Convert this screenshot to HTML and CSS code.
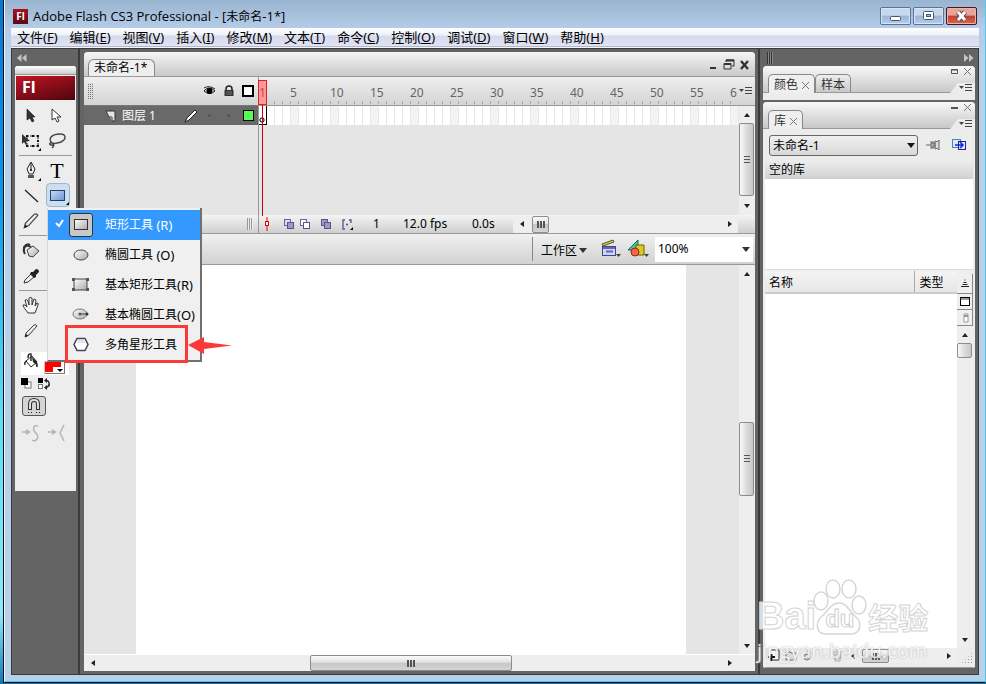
FILE: index.html
```html
<!DOCTYPE html>
<html lang="zh-CN">
<head>
<meta charset="utf-8">
<title>Adobe Flash CS3 Professional - [未命名-1*]</title>
<link rel="stylesheet" href="styles.css">
</head>
<body>
<svg class="defs" aria-hidden="true">
  <defs>
    <linearGradient id="metal" x1="0" y1="0" x2="1" y2="1"><stop offset="0" stop-color="#fff"/><stop offset="1" stop-color="#a8a8a8"/></linearGradient>
    <linearGradient id="bluefill" x1="0" y1="0" x2="1" y2="1"><stop offset="0" stop-color="#c9dcfa"/><stop offset="1" stop-color="#6f93d6"/></linearGradient>
    <symbol id="menu-lines" viewBox="0 0 14 10"><path d="M0 3h5L2.500 6z" fill="#444"/><path d="M6 1.500h7M6 4.500h7M6 7.500h7" stroke="#444"/></symbol>
    <symbol id="pencil" viewBox="0 0 16 16"><path d="M2 14l1-4 8-8q2-1 3 1l-8 9z" fill="#ddd" stroke="#444"/><path d="M2 14l1-3 2 2z" fill="#111"/><path d="M5 10l7-7" stroke="#fff"/></symbol>
  </defs>
</svg>
<div class="window">
  <header class="titlebar">
    <span class="app-icon">Fl</span>
    <h1>Adobe Flash CS3 Professional - [<span>未命名</span>-1*]</h1>
    <div class="window-buttons">
      <button aria-label="最小化"><svg width="29" height="16"><rect x="9.500" y="8.500" width="10" height="4" rx="1" fill="#fff" stroke="#46566f"/></svg></button>
      <button aria-label="还原"><svg width="29" height="16"><rect x="9.500" y="3.500" width="10" height="8" rx="1" fill="#fff" stroke="#46566f"/><rect x="12.500" y="6.500" width="4" height="2" fill="#9cc0e6" stroke="#46566f"/></svg></button>
      <button class="close" aria-label="关闭"><svg width="29" height="16"><path d="M11 4l7 8M18 4l-7 8" stroke="#5a4a58" stroke-width="5"/><path d="M11 4l7 8M18 4l-7 8" stroke="#fff" stroke-width="3"/></svg></button>
    </div>
  </header>
  <nav class="menubar">
    <button>文件(<u>F</u>)</button><button>编辑(<u>E</u>)</button><button>视图(<u>V</u>)</button><button>插入(<u>I</u>)</button><button>修改(<u>M</u>)</button><button>文本(<u>T</u>)</button><button>命令(<u>C</u>)</button><button>控制(<u>O</u>)</button><button>调试(<u>D</u>)</button><button>窗口(<u>W</u>)</button><button>帮助(<u>H</u>)</button>
  </nav>
  <div class="main">
    <aside class="tools-column">
      <button class="collapse" aria-label="折叠"><svg width="10" height="8"><path d="M4.500 0v8L0 4zM9.500 0v8L5 4z" fill="#c4c4c4"/></svg></button>
      <div class="tools">
        <div class="tools-grip"></div>
        <div class="fl-logo">Fl</div>
        <div class="tool-grid">
          <button aria-label="选择工具"><svg width="20" height="20"><path d="M6 3v11l3-2 2 4 2-1-2-4h3z" fill="#333" stroke="#111" stroke-width=".6"/></svg></button>
          <button aria-label="部分选取工具"><svg width="20" height="20"><path d="M5 3v11l3-2 2 4 2-1-2-4h4z" fill="#fff" stroke="#333"/></svg></button>
          <button aria-label="任意变形工具"><svg width="20" height="20"><rect x="6" y="5" width="11" height="10" fill="none" stroke="#222" stroke-dasharray="2 1"/><path d="M1 3v10l2-2 2 3 1-1-1-3h4z" fill="#333"/><path d="M5 4h2v2H5zM11 4h2v2h-2zM16 4h2v2h-2zM16 9h2v2h-2zM5 14h2v2H5zM11 14h2v2h-2zM16 14h2v2h-2z" fill="#111"/><path d="M20 17v3h-3z"/></svg></button>
          <button aria-label="套索工具"><svg width="20" height="20"><path d="M5 12C0 7 6 3 13 3c6 0 7 5 1 8-3 1-6 2-9 1zm0 0c-3-1-3 2 0 2s2-2 0-2c3 1 2 3 0 5" fill="none" stroke="#444" stroke-width="1.400"/></svg></button>
        </div>
        <hr>
        <div class="tool-grid">
          <button aria-label="钢笔工具"><svg width="20" height="20"><path d="M10 1l4 7-2 5H8L6 8z" fill="#eee" stroke="#222"/><path d="M10 2v7" stroke="#222"/><circle cx="10" cy="9" r="1"/><path d="M7 14h6v3H7z" fill="#555"/><path d="M20 17v3h-3z"/></svg></button>
          <button aria-label="文本工具"><span class="text-tool">T</span></button>
          <button aria-label="线条工具"><svg width="20" height="20"><path d="M4 4l13 12" stroke="#222" stroke-width="1.300"/></svg></button>
          <div class="tool-slot">
            <button class="active" aria-label="矩形工具"><svg width="22" height="20"><rect x="3.500" y="5.500" width="14" height="10" fill="url(#bluefill)" stroke="#24406f"/><path d="M22 17v3h-3z"/></svg></button>
            <div class="tool-menu" role="menu">
              <button class="selected" role="menuitem"><svg class="check" width="9" height="9"><path d="M1 4l3 3 4-6" fill="none" stroke="#fff" stroke-width="2"/></svg><span class="menu-icon"><svg width="22" height="22"><rect x="4.500" y="5.500" width="13" height="10" fill="url(#metal)" stroke="#333"/></svg></span>矩形工具<span class="key">&nbsp;(R)</span></button>
              <button role="menuitem"><span class="menu-icon"><svg width="22" height="22"><ellipse cx="11" cy="11" rx="7" ry="5" fill="url(#metal)" stroke="#444"/></svg></span>椭圆工具<span class="key">&nbsp;(O)</span></button>
              <button role="menuitem"><span class="menu-icon"><svg width="22" height="22"><rect x="4" y="5" width="13" height="11" fill="url(#metal)" stroke="#444"/><path d="M2 4h3v3H2zM16 4h3v3h-3zM2 14h3v3H2zM16 14h3v3h-3z" fill="#555"/></svg></span>基本矩形工具<span class="key">(R)</span></button>
              <button role="menuitem"><span class="menu-icon"><svg width="22" height="22"><ellipse cx="10" cy="10" rx="7" ry="5" fill="url(#metal)" stroke="#777"/><path d="M10 10h7" stroke="#444"/><circle cx="10" cy="10" r="1.500" fill="#555"/><circle cx="17" cy="10" r="1.500" fill="#333"/></svg></span>基本椭圆工具<span class="key">(O)</span></button>
              <button role="menuitem"><span class="menu-icon"><svg width="22" height="22"><path d="M7 4.500h8l3 6-3 6H7l-3-6z" fill="#fff" stroke="#445" stroke-width="1.500"/><path d="M8 6h6l1 3H7z" fill="#dce5ea"/></svg></span>多角星形工具</button>
              <div class="highlight"></div>
              <svg class="arrow" width="44" height="17"><path d="M0 8L16 0v5l28 3.500L16 12v5z" fill="#f93a37"/></svg>
            </div>
          </div>
          <button aria-label="铅笔工具"><svg width="18" height="18"><use href="#pencil"/></svg></button>
        </div>
        <hr>
        <div class="tool-grid single">
          <button aria-label="颜料桶工具"><svg width="20" height="20"><path d="M4 13c-3-5 0-9 4-8l3 2M3 11V6q3-4 6-2" fill="none" stroke="#333" stroke-width="2"/><path d="M6 9l6-4 6 5-6 6-4-1z" fill="url(#metal)" stroke="#444"/></svg></button>
          <button aria-label="滴管工具"><svg width="20" height="20"><path d="M3 17l1-3 6-6 3 3-6 5z" fill="#eee" stroke="#333"/><path d="M10 6l2 0 3-3q3 0 3 3l-3 3v2l-2 1-4-4z" fill="#222"/></svg></button>
        </div>
        <hr>
        <div class="tool-grid single">
          <button aria-label="手形工具"><svg width="20" height="20"><path d="M7 17C5 14 2 11 2 9q2-1 4 2L4 4q2-1 3 1l1 4V2q2-1 3 0v7l2-6q2 0 2 2l-1 5 2-3q2 0 1 2l-3 8z" fill="#f6f6f6" stroke="#333"/></svg></button>
          <button aria-label="笔触颜色"><svg width="16" height="16"><use href="#pencil"/></svg></button>
        </div>
        <div class="fill-row"><svg width="20" height="20"><path d="M5 9l6-5 5 6-6 5z" fill="#fff" stroke="#222"/><path d="M10 9V2q-3-1-3 4M5 9q-2 2-1 4M15 9l1 6" fill="none" stroke="#222" stroke-width="1.400"/><path d="M11 5l5 5 1 4-5-4z" fill="#222"/></svg><button class="swatch" aria-label="填充颜色"><svg width="20" height="12"><path d="M0 0h16v5H8v5H0z" fill="red"/><path d="M12 7h6l-3 3z"/></svg></button></div>
        <div class="small-row"><svg width="12" height="12"><rect x="4" y="4" width="6" height="6" fill="#fff" stroke="#777"/><path d="M0 0h7v7H0z"/></svg><svg width="14" height="12"><path d="M0 0h5v5H0z"/><rect x=".5" y="6.500" width="4" height="4" fill="#fff" stroke="#777"/><path d="M8 2.500q4 0 3 6M8 9.500q2 0 3-3" fill="none" stroke="#222" stroke-width="1.400"/><path d="M6 2.500l3-2.500v5zM6 9.500L9 7v5z" fill="#222"/></svg></div>
        <button class="magnet" aria-label="贴紧至对象"><svg width="18" height="18"><path d="M5 13V7q0-4 4-4t4 4v6" fill="none" stroke="#333" stroke-width="4"/><path d="M5 12V7q0-4 4-4t4 4v5" fill="none" stroke="#ddd" stroke-width="2"/><path d="M3 15.500h1M6 15.500h1M11 15.500h1M14 15.500h1" stroke="#222"/></svg></button>
        <div class="tool-grid"><span><svg width="20" height="20"><path d="M1 8h5M17 2q-6-1-4 5c3 3 5 5 3 8q-2 3-5 1" fill="none" stroke="#b4b4b4" stroke-width="1.500"/><path d="M5 5l5 3-5 3z" fill="#b4b4b4"/></svg></span><span><svg width="20" height="20"><path d="M1 8h5M17 1l-4 8 4 8" fill="none" stroke="#b4b4b4" stroke-width="1.500"/><path d="M5 5l5 3-5 3z" fill="#b4b4b4"/></svg></span></div>
      </div>
    </aside>

    <main class="document">
      <div class="doc-tabs">
        <button class="doc-tab">未命名-1*</button>
        <div class="doc-controls"><svg width="10" height="12"><path d="M2 9h6" stroke="#333" stroke-width="2"/></svg><svg width="12" height="12"><path d="M3 3V1h8v6H9M1 4.500h7V10H1z" fill="none" stroke="#333"/><path d="M3 1.500h8M1 5h7" stroke="#333" stroke-width="2"/></svg><svg width="10" height="12"><path d="M1 2l7 8M8 2l-7 8" stroke="#333" stroke-width="2.400"/></svg></div>
      </div>
      <section class="timeline">
        <div class="layers">
          <div class="layer-head"><span class="grip"></span>
            <svg width="13" height="12"><path d="M1 6q5-6 11 0-5 5-11 0" fill="#ddd" stroke="#222"/><circle cx="6.500" cy="6" r="3"/><path d="M1 3q5-3 11 1" fill="none" stroke="#222"/></svg>
            <svg width="12" height="12"><path d="M3 6V4q0-3 3-3t3 3v2" fill="none" stroke="#222" stroke-width="1.500"/><path d="M1.500 5h9v6h-9z" fill="#333"/><path d="M3 7h6M3 9h6" stroke="#777"/></svg>
            <svg width="12" height="12"><rect x="1" y="1" width="10" height="10" fill="#fff" stroke="#000" stroke-width="2"/></svg>
          </div>
          <div class="layer-row"><svg width="11" height="12"><path d="M1 1h9v10H7V7H4z" fill="#e4e4e4" stroke="#333"/><path d="M1 2l4 5h2v4z" fill="#888"/></svg><span class="layer-name">图层 1</span><svg width="14" height="14"><path d="M1 13l2-4 8-8 2 2-8 8z" fill="#fff" stroke="#222"/></svg><i class="dot"></i><i class="dot"></i><span class="layer-color"></span></div>
          <div class="layer-foot"><span class="foot-grip"></span></div>
        </div>
        <div class="frames">
          <div class="ruler"><div class="numbers"><span>5</span><span>10</span><span>15</span><span>20</span><span>25</span><span>30</span><span>35</span><span>40</span><span>45</span><span>50</span><span>55</span><span class="last">6</span></div><svg width="14" height="10"><use href="#menu-lines"/></svg></div>
          <div class="frame-body">
            <div class="frame-area"><div class="frame-row"><span class="keyframe"></span></div></div>
            <div class="vscroll"><button class="up" aria-label="向上"></button><div class="thumb"></div><button class="down" aria-label="向下"></button></div>
          </div>
          <div class="frame-foot">
            <svg width="6" height="14"><path d="M3 0v14" stroke="#e00"/><rect x="1.500" y="4.500" width="3" height="4" fill="#fff" stroke="#e00"/></svg>
            <svg width="11" height="11"><rect x=".5" y=".5" width="6" height="6" fill="#dde" stroke="#669"/><rect x="3.500" y="3.500" width="6" height="6" fill="#99c" stroke="#558"/></svg>
            <svg width="11" height="11"><rect x=".5" y=".5" width="6" height="6" fill="#fff" stroke="#669"/><rect x="3.500" y="3.500" width="6" height="6" fill="#fff" stroke="#558"/></svg>
            <svg width="11" height="11"><rect x=".5" y=".5" width="6" height="6" fill="#99c" stroke="#558"/><rect x="3.500" y="3.500" width="6" height="6" fill="#99c" stroke="#558"/></svg>
            <svg width="11" height="11"><path d="M3 1H1v9h2M7 1h2v3M4 5.500h2" fill="none" stroke="#558" stroke-width="1.300"/><path d="M11 8v3H8z"/></svg>
            <output class="current">1</output><output class="fps">12.0 fps</output><output class="time">0.0s</output>
            <div class="hscroll"><button class="left" aria-label="向左"></button><div class="thumb"></div><button class="right" aria-label="向右"></button></div>
          </div>
          <div class="playhead">1</div>
        </div>
      </section>
      <div class="edit-bar">
        <button class="workspace">工作区<i class="caret"></i></button>
        <button aria-label="编辑场景"><svg width="20" height="20"><path d="M1 5l11-4 1 2L2 7z" fill="#d8d020" stroke="#554"/><rect x="1.500" y="7.500" width="13" height="9" fill="#ccd4ff" stroke="#448"/><path d="M2 9h12M5 12.500h7" stroke="#66a" stroke-width="2"/><path d="M15 15h5l-2.500 3z" fill="#442"/></svg></button>
        <button aria-label="编辑元件"><svg width="22" height="20"><path d="M1 11L11 1v10z" fill="#4cc49c" stroke="#166"/><path d="M9 6h8v10H9z" fill="#e0c820" stroke="#660"/><circle cx="8" cy="13" r="4" fill="#f4683c" stroke="#922"/><path d="M17 15h5l-2.500 3z" fill="#442"/></svg></button>
        <div class="zoom"><input aria-label="缩放" value="100%"><i class="caret"></i></div>
      </div>
      <div class="stage">
        <div class="pasteboard"><div class="canvas"></div></div>
        <div class="vscroll"><button class="up" aria-label="向上"></button><div class="thumb"></div><button class="down" aria-label="向下"></button></div>
      </div>
      <div class="doc-foot"><div class="hscroll"><button class="left" aria-label="向左"></button><div class="thumb"></div><button class="right" aria-label="向右"></button></div></div>
    </main>

    <aside class="panels">
      <div class="panels-head"><span class="panels-grip"></span><button aria-label="展开"><svg width="10" height="8"><path d="M0 0v8l4.500-4zM5 0v8l4.500-4z" fill="#c4c4c4"/></svg></button></div>
      <section class="panel">
        <div class="panel-tabs"><button class="tab on">颜色<svg width="7" height="7"><path d="M0 0l7 7M7 0L0 7" stroke="#777"/></svg></button><button class="tab">样本</button>
          <div class="panel-side"><svg width="20" height="8"><path d="M.5 1.500h6v4h-6z" fill="none" stroke="#555"/><path d="M0 2h7" stroke="#555"/><path d="M13 0l7 7M20 0l-7 7" stroke="#777"/></svg><span class="notch"><svg width="14" height="10"><use href="#menu-lines"/></svg></span></div></div>
      </section>
      <section class="panel library">
        <div class="panel-tabs"><button class="tab on">库<svg width="7" height="7"><path d="M0 0l7 7M7 0L0 7" stroke="#777"/></svg></button>
          <div class="panel-side"><svg width="20" height="8"><path d="M0 4h7" stroke="#555" stroke-width="2"/><path d="M13 0l7 7M20 0l-7 7" stroke="#777"/></svg><span class="notch"><svg width="14" height="10"><use href="#menu-lines"/></svg></span></div></div>
        <div class="library-pick"><select aria-label="库文档"><option>未命名-1</option></select>
          <button aria-label="固定当前库"><svg width="14" height="12"><path d="M0 6h5M5 2v8M7 2v8M5 4h4v4H5M9 2q3 2 4-1v10q-1-3-4-1z" fill="#ddd" stroke="#666"/></svg></button>
          <button class="new-panel" aria-label="新建库面板"><svg width="15" height="12"><rect x=".5" y=".5" width="8" height="8" fill="#d8ecf8" stroke="#48a"/><rect x="6.500" y="2.500" width="7" height="8" fill="#d8e8ff" stroke="#228"/><path d="M3 6h7M8 3l3 3-3 3" fill="none" stroke="#12d" stroke-width="1.500"/></svg></button></div>
        <div class="library-title">空的库</div>
        <div class="preview"></div>
        <div class="library-list">
          <table><thead><tr><th>名称</th><th class="type">类型</th></tr></thead></table>
          <div class="list-side">
            <button class="sort" aria-label="排序"><svg width="8" height="9"><path d="M3.500 1h1M2.500 3.500h3M1.500 5.500h5M0 7.500h8" stroke="#222"/></svg></button>
            <button aria-label="宽库视图"><svg width="10" height="10"><rect x=".5" y=".5" width="9" height="8" fill="#fff" stroke="#000"/><path d="M1 2h8" stroke="#999" stroke-width="2"/></svg></button>
            <button aria-label="窄库视图"><svg width="8" height="10"><path d="M3 1h4v8H3z" fill="#fff" stroke="#999"/><path d="M3 3h4" stroke="#999" stroke-width="2"/></svg></button>
            <div class="vscroll"><button class="up" aria-label="向上"></button><div class="thumb"></div><button class="down" aria-label="向下"></button></div>
          </div>
        </div>
        <div class="library-foot">
          <button aria-label="新建元件"><svg width="13" height="13"><path d="M3 1h8v10H5" fill="#fff" stroke="#222"/><path d="M0 8h7M3.500 5v7" stroke="#111" stroke-width="2"/></svg></button>
          <button aria-label="新建文件夹"><svg width="13" height="13"><path d="M1 3h4l1 1h5v7H1z" fill="#ddd" stroke="#666"/></svg></button>
          <button aria-label="属性"><svg width="11" height="13"><circle cx="5" cy="8" r="3" fill="#ccc" stroke="#777"/><path d="M3 6l4-5 1 4" fill="none" stroke="#777"/></svg></button>
          <button class="trash" aria-label="删除"><svg width="11" height="13"><path d="M1 3h9M2 5h7l-1 7H3zM4 1h3M4 6v5M7 6v5" fill="none" stroke="#aaa"/></svg></button>
          <div class="hscroll"><button class="left" aria-label="向左"></button><div class="thumb"></div><button class="right" aria-label="向右"></button></div>
          <span class="resize"></span>
        </div>
      </section>
    </aside>
  </div>
</div>
<div class="watermark">
  <div class="mark-name"><span class="bai">Bai</span><span class="paw"><svg width="54" height="56" viewBox="0 0 54 56"><g fill="#fff" fill-opacity=".85" stroke="#d6d6d6" stroke-width="1.500"><ellipse cx="8" cy="22" rx="7" ry="9"/><ellipse cx="20" cy="10" rx="7" ry="9"/><ellipse cx="36" cy="10" rx="7" ry="9"/><ellipse cx="46" cy="26" rx="7" ry="9"/><path d="M26 24c8 0 10 8 17 14 6 5 5 17-5 17H13C2 55 3 43 8 38c8-6 9-14 18-14z"/></g></svg><b>du</b></span><span class="jy">经验</span></div>
  <div class="mark-url">jingyan.baidu.com</div>
</div>
</body>
</html>
```
FILE: styles.css
```css
* { box-sizing: border-box; }
body {
  margin: 0;
  min-height: 100vh;
  display: flex;
  position: relative;
  padding: 0 0 1px 3px;
  background: linear-gradient(#0876d4, #0a9ae8 30%, #5cdcf8 60%, #8ce8f8 90%, #1277b8);
  font: 12px/16px "Noto Sans", "Noto Sans CJK SC", sans-serif;
  color: #000;
  overflow: hidden;
}
button { font: inherit; color: inherit; border: 0; padding: 0; margin: 0; background: none; display: block; white-space: nowrap; }
svg { display: block; flex: none; }
.defs { position: absolute; width: 0; height: 0; }
.window {
  flex: 1;
  min-width: 0;
  display: flex;
  flex-direction: column;
  border-left: 1px solid #111;
  border-bottom: 1px solid #111;
  border-right: 1px solid #4cc8f0;
  box-shadow: inset 1px 0 #eef5fc, inset 0 -1px #4cc8e8;
  background: linear-gradient(#99b4d0, #b4cce7 28px, #b9d0eb 60px);
  padding: 0 6px 7px 7px;
}

/* title bar and menu */
.titlebar { height: 28px; display: flex; align-items: center; padding: 4px 2px 0 2px; }
.app-icon { width: 15px; height: 15px; background: linear-gradient(#a31420, #5c0810); color: #fff; font: bold 10px/15px "Open Sans", sans-serif; text-align: center; }
.titlebar h1 { margin: 0 0 0 5px; font: 400 13px/18px "Open Sans", "Noto Sans CJK SC", sans-serif; flex: 1; }
.titlebar h1 span { font-size: 12px; }
.window-buttons { display: flex; gap: 2px; }
.window-buttons button { width: 31px; height: 18px; border: 1px solid #5d7390; border-radius: 2px; background: linear-gradient(#c6d8ec 45%, #9ab5d3 50%, #b4cfec); box-shadow: inset 0 0 0 1px #d7e5f4; }
.window-buttons .close { border-color: #4a1522; background: linear-gradient(#e5a59b 45%, #c04030 50%, #d46a50); box-shadow: inset 0 0 0 1px #eeb2a6; }
.menubar { height: 20px; display: flex; gap: 12px; padding: 0 6px 1px; background: linear-gradient(#fff, #eef1f8 7px, #d6daed 8px, #dfe3f4 18px, #b4b8cc 18px, #b4b8cc 19px, #f5f5f8 19px); font-size: 13px; line-height: 19px; }

.main { flex: 1; display: flex; min-height: 0; background: #646464; border: 1px solid #3a3a3a; }

/* tools */
.tools-column { flex: 0 0 68px; border-right: 2px solid #3a3a3a; padding: 0 2px 0 3px; }
.collapse { height: 17px; padding: 4px 2px; }
.tools { background: #ededed; height: 425px; border-radius: 3px 3px 0 0; }
.tools-grip { height: 9px; background: linear-gradient(#fff, #ccc); border-bottom: 1px solid #999; border-radius: 3px 3px 0 0; }
.fl-logo { height: 24px; margin: 1px 1px 3px; padding-left: 6px; background: linear-gradient(165deg, #c21426, #4d060c); color: #fff; font: bold 16px/23px "Open Sans", sans-serif; }
.tool-grid { display: grid; grid-template-columns: 26px 26px; grid-auto-rows: 25px; margin-left: 3px; }
.tool-grid.single { grid-template-columns: 26px; }
.tool-grid button, .tool-grid > span { display: flex; align-items: center; justify-content: center; }
.text-tool { font: 22px/24px "Liberation Serif", serif; }
.tools hr { border: 0; height: 1px; background: #999; margin: 2px 4px; }
.tool-slot { position: relative; }
.tool-slot .active { width: 24px; height: 24px; margin-left: 2px; border: 1px solid #9cb6cc; border-radius: 4px; background: #cbdfee; }
.tool-menu { position: absolute; z-index: 5; left: 3px; top: 25px; width: 155px; padding: 2px 0 0; background: #f0f0f0; border: 1px solid #d8d8d8; border-width: 0 2px 2px 1px; border-right-color: #707070; border-bottom-color: #707070; }
.tool-menu button { width: 100%; height: 30px; justify-content: flex-start; padding-left: 21px; position: relative; font-size: 12px; line-height: 16px; }
.tool-menu .key { font-size: 13px; }
.tool-menu .selected { background: #3399ff; color: #fff; }
.check { position: absolute; left: 7px; top: 9px; }
.menu-icon { width: 24px; height: 24px; margin-right: 12px; border: 1px solid transparent; border-radius: 3px; }
.selected .menu-icon { border-color: #333; background: #c8c8c8; }
.highlight { position: absolute; left: 17px; top: 117px; width: 123px; height: 38px; border: 3px solid #f93a37; }
.arrow { position: absolute; left: 140px; top: 129px; }
.fill-row { display: flex; margin: 9px 7px 0 6px; height: 23px; background: #fff; }
.swatch { margin: 9px 0 0 3px; width: 21px; height: 13px; border: 1px solid #ccc; border-color: #ccc #777 #777 #ccc; background: #fff; }
.small-row { display: flex; gap: 5px; padding: 3px 6px; height: 21px; }
.magnet { margin: 0 0 5px 7px; width: 24px; height: 20px; border: 1px solid #555; border-radius: 3px; background: #d4d4d4; display: flex; justify-content: center; }

/* document */
.document { flex: 1; min-width: 0; display: flex; flex-direction: column; margin: 3px 3px 3px 4px; background: #e5e5e5; border-radius: 4px 4px 0 0; }
.doc-tabs { height: 25px; display: flex; justify-content: space-between; align-items: flex-end; padding: 0 5px 0 4px; background: linear-gradient(#f5f5f5, #c9c9c9); border-bottom: 1px solid #999; border-radius: 4px 4px 0 0; }
.doc-tab { height: 17px; padding: 0 7px 0 5px; border: 1px solid #888; border-bottom: 0; border-radius: 6px 6px 0 0; background: #efefef; line-height: 16px; }
.doc-controls { display: flex; gap: 5px; padding-bottom: 5px; }
.timeline { display: flex; height: 157px; border-bottom: 1px solid #999; }
.layers { flex: 0 0 175px; border-right: 1px solid #999; display: flex; flex-direction: column; }
.layer-head { height: 29px; display: flex; align-items: center; gap: 7px; padding: 0 4px; background: linear-gradient(#efefef, #d4d4d4); border-bottom: 1px solid #777; }
.grip { width: 5px; height: 16px; margin-right: auto; background: repeating-linear-gradient(#ddd 0 1px, transparent 1px 2px), repeating-linear-gradient(90deg, #777 0 1px, transparent 1px 2px); }
.layer-row { height: 19px; background: #696969; color: #fff; display: flex; align-items: center; padding: 0 4px 0 21px; }
.layer-name { width: 60px; margin: 0 2px 0 6px; white-space: nowrap; }
.dot { width: 3px; height: 3px; border-radius: 50%; background: #555; margin-left: 10px; }
.dot + .dot { margin-left: 16px; }
.layer-color { width: 11px; height: 11px; margin-left: auto; background: #5f5; border: 1px solid #000; }
.layer-foot { margin-top: auto; height: 18px; padding: 3px 5px; display: flex; justify-content: flex-end; background: linear-gradient(#f4f4f4, #cfcfcf); }
.foot-grip { width: 6px; background: repeating-linear-gradient(90deg, #999 0 1px, #eee 1px 2px); }
.frames { flex: 1; min-width: 0; position: relative; display: flex; flex-direction: column; }
.ruler { height: 29px; display: flex; justify-content: space-between; align-items: center; padding-right: 2px; background: linear-gradient(#efefef, #d4d4d4); border-bottom: 1px solid #999; }
.numbers { flex: 1; min-width: 0; height: 28px; margin-right: 2px; padding: 6px 0 0 31px; display: flex; overflow: hidden; font-size: 12px; line-height: 20px; color: #666; background: repeating-linear-gradient(90deg, transparent 0 7px, #aaa 7px 8px) 0 24px / 100% 3px no-repeat; }
.numbers span { flex: 0 0 40px; }
.numbers .last { flex-basis: 7px; }
.frame-body { flex: 1; display: flex; min-height: 0; }
.frame-area { flex: 1; }
.frame-row { height: 19px; background: repeating-linear-gradient(90deg, transparent 0 7px, #e6e6e6 7px 8px), repeating-linear-gradient(90deg, #fff 0 32px, #f3f3f3 32px 40px); }
.keyframe { display: block; width: 8px; height: 19px; border: solid #000; border-width: 0 1px 1px 0; background: radial-gradient(circle at 3px 14px, #fff 1px, #000 2px, #000 2px, #fff 3px); }
.frame-foot { height: 18px; display: flex; align-items: center; background: linear-gradient(#f4f4f4, #cfcfcf); padding-left: 5px; white-space: nowrap; }
.frame-foot > svg { margin-right: 5px; }
.frame-foot > svg:nth-child(3), .frame-foot > svg:nth-child(4) { margin-right: 10px; }
.frame-foot > svg:first-child { margin-right: 14px; }
.current { width: 30px; margin-left: 15px; }
.fps { width: 69px; }
.time { width: 41px; }
.frame-foot .hscroll { flex: 1; margin-right: 17px; height: 17px; }
.frame-foot .hscroll .thumb { width: 17px; margin-left: 2px; margin-right: auto; }
.playhead { position: absolute; left: -1px; top: 3px; width: 9px; height: 25px; border: 1px solid #d22; background: #f99; color: #c44; font-size: 12px; line-height: 24px; text-align: center; }
.playhead::after { content: ""; position: absolute; left: 3px; top: 24px; width: 1px; height: 111px; background: #d00000; }

/* scroll bars */
.vscroll { width: 16px; flex: none; display: flex; flex-direction: column; background: #eee; }
.hscroll { display: flex; background: #eee; }
.vscroll button { height: 17px; display: flex; align-items: center; justify-content: center; }
.hscroll button { width: 17px; display: flex; align-items: center; justify-content: center; }
.vscroll button::before, .hscroll button::before { content: ""; border: 3px solid transparent; }
.vscroll .up::before { border-top: 0; border-bottom: 4px solid #222; }
.vscroll .down::before { border-bottom: 0; border-top: 4px solid #222; }
.hscroll .left::before { border-left: 0; border-right: 4px solid #222; }
.hscroll .right::before { border-right: 0; border-left: 4px solid #222; }
.thumb { border: 1px solid #8c8c8c; border-radius: 2px; display: flex; align-items: center; justify-content: center; }
.thumb::before { content: ""; width: 8px; height: 8px; }
.vscroll .thumb { width: 15px; background: linear-gradient(90deg, #fafafa, #dcdcde 50%, #c6c6c9); }
.hscroll .thumb { background: linear-gradient(#fafafa, #e2e2e4 45%, #c6c6c9 50%, #d4d4d6); }
.vscroll .thumb::before { width: 6px; background: repeating-linear-gradient(#555 0 1px, transparent 1px 3px); }
.hscroll .thumb::before { height: 7px; background: repeating-linear-gradient(90deg, #555 0 2px, transparent 2px 3px); }
.frame-body .thumb { flex: 1; }
.frame-body .vscroll .down { height: 19px; }

/* edit bar and stage */
.edit-bar { height: 31px; display: flex; align-items: center; justify-content: flex-end; gap: 6px; padding-right: 2px; background: linear-gradient(#f0f0f0, #d2d2d2); border-bottom: 1px solid #999; }
.workspace { height: 24px; border-left: 1px solid #888; padding: 3px 8px 0; display: flex; align-items: center; gap: 2px; }
.caret { width: 0; height: 0; border: 4px solid transparent; border-top: 5px solid #333; border-bottom: 0; }
.zoom { display: flex; align-items: center; width: 98px; height: 25px; background: #fff; padding-right: 3px; }
.zoom input { flex: 1; min-width: 0; border: 0; background: none; padding: 0 3px; font: inherit; line-height: 20px; }
.stage { flex: 1; display: flex; min-height: 0; }
.pasteboard { flex: 1; padding: 0 53px 0 52px; background: #e5e5e5; display: flex; }
.canvas { flex: 1; background: #fff; }
.stage .thumb { height: 74px; margin-top: auto; }
.stage .down { margin-top: 141px; }
.doc-foot { height: 17px; background: #eee; border-top: 1px solid #fff; padding-right: 17px; display: flex; }
.doc-foot .hscroll { flex: 1; justify-content: space-between; }
.doc-foot .thumb { width: 202px; }

/* right hand panels */
.panels { flex: 0 0 220px; border-left: 2px solid #3a3a3a; padding: 0 3px; display: flex; flex-direction: column; }
.panels-head { height: 17px; display: flex; justify-content: space-between; align-items: center; padding: 0 1px 0 4px; }
.panels-grip { width: 6px; height: 12px; background: repeating-linear-gradient(90deg, #333 0 1px, #888 1px 2px); }
.panel { background: #ececec; border-radius: 4px 4px 0 0; height: 34px; }
.panel-tabs { height: 27px; display: flex; align-items: flex-end; padding-left: 5px; background: linear-gradient(#f8f8f8, #c8c8c8); border-bottom: 1px solid #999; border-radius: 4px 4px 0 0; }
.tab { height: 18px; display: flex; align-items: center; gap: 4px; padding: 2px 5px 0; border: 1px solid #888; border-bottom: 0; border-radius: 5px 5px 0 0; color: #333; background: linear-gradient(#eee, #c8c8c8); }
.tab.on { height: 19px; margin-bottom: -1px; background: #efefef; }
.panel-side { margin-left: auto; display: flex; flex-direction: column; align-items: flex-end; gap: 7px; }
.panel-side > svg { margin-right: 4px; }
.notch { width: 25px; height: 10px; margin-bottom: -1px; padding-left: 9px; background: #ececec; clip-path: polygon(8px 0, 100% 0, 100% 100%, 0 100%); }
.library { flex: 1; min-height: 0; margin: 2px 0 6px; padding: 0 2px; display: flex; flex-direction: column; border-radius: 4px 4px 2px 2px; }
.library .panel-tabs { flex: 0 0 27px; margin: 0 -2px; }
.library-pick { position: relative; display: flex; align-items: center; gap: 8px; height: 32px; padding: 0 6px 0 4px; }
.library-pick select { flex: 1; height: 21px; appearance: none; border: 1px solid #666; border-radius: 3px; padding: 0 3px; font: inherit; line-height: 17px; color: #000; background: linear-gradient(#f0f0f0, #d8d8d8); }
.library-pick .new-panel { margin-left: 4px; }
.library-pick::before { content: ""; position: absolute; right: 58px; top: 14px; border: 4px solid transparent; border-top: 5px solid #111; border-bottom: 0; }
.library-title { height: 18px; padding-left: 4px; line-height: 17px; background: linear-gradient(#ececec, #d0d0d0); }
.preview { height: 91px; background: #fff; border-bottom: 1px solid #ddd; }
.library-list { flex: 1; min-height: 0; display: flex; align-items: flex-start; margin-top: 1px; background: #fff; }
.library-list table { flex: 1; border-collapse: collapse; }
.library-list th { height: 22px; padding: 3px 0 0 4px; font-weight: 400; text-align: left; background: linear-gradient(#f4f4f4, #e6e6e6); border-bottom: 2px solid #ccc; }
.library-list .type { width: 43px; padding-left: 5px; border-left: 1px solid #aaa; }
.list-side { align-self: stretch; width: 16px; padding-top: 3px; display: flex; flex-direction: column; background: #eee; }
.list-side > button { height: 16px; display: flex; align-items: center; justify-content: center; background: #efefef; border: solid #888; border-width: 0 1px 1px 0; }
.list-side > .sort { height: 20px; }
.list-side .vscroll { flex: 1; width: auto; }
.list-side .thumb { height: 15px; }
.list-side .thumb::before { display: none; }
.list-side .down { margin-top: auto; }
.library-foot { height: 20px; display: flex; align-items: flex-start; padding: 1px 0 2px 3px; gap: 4px; border-bottom: 1px solid #999; }
.library-foot .trash { margin-left: 15px; }
.library-foot .hscroll { flex: 1; height: 14px; }
.library-foot .hscroll .left { width: 11px; }
.library-foot .hscroll .thumb { width: 27px; margin-right: auto; margin-left: 4px; }
.library-foot .resize { width: 12px; height: 12px; margin-top: 3px; background: radial-gradient(circle, #999 1px, transparent 1px) 0 0 / 3px 3px; clip-path: polygon(100% 0, 100% 100%, 0 100%); }

/* watermark over the lower right corner */
.watermark { position: absolute; z-index: 10; right: 53px; bottom: 20px; width: 176px; color: rgba(255, 255, 255, .8); pointer-events: none; }
.mark-name { display: flex; align-items: flex-end; height: 60px; margin-bottom: 3px; }
.bai, .jy { font: bold 38px/38px "Liberation Sans", "Noto Sans CJK SC", sans-serif; -webkit-text-stroke: 1px #d4d4d4; white-space: nowrap; }
.jy { font: bold 30px/38px "Noto Sans CJK SC", sans-serif; }
.paw { position: relative; margin: 0 1px 0 -3px; }
.paw b { position: absolute; left: 12px; bottom: 3px; font: bold 24px/26px "Liberation Sans", sans-serif; color: #fff; -webkit-text-stroke: 1px #d0d0d0; }
.mark-url { font: 20px/26px "Open Sans", sans-serif; white-space: nowrap; color: rgba(255, 255, 255, .85); text-shadow: 0 0 2px #aaa; }
```
